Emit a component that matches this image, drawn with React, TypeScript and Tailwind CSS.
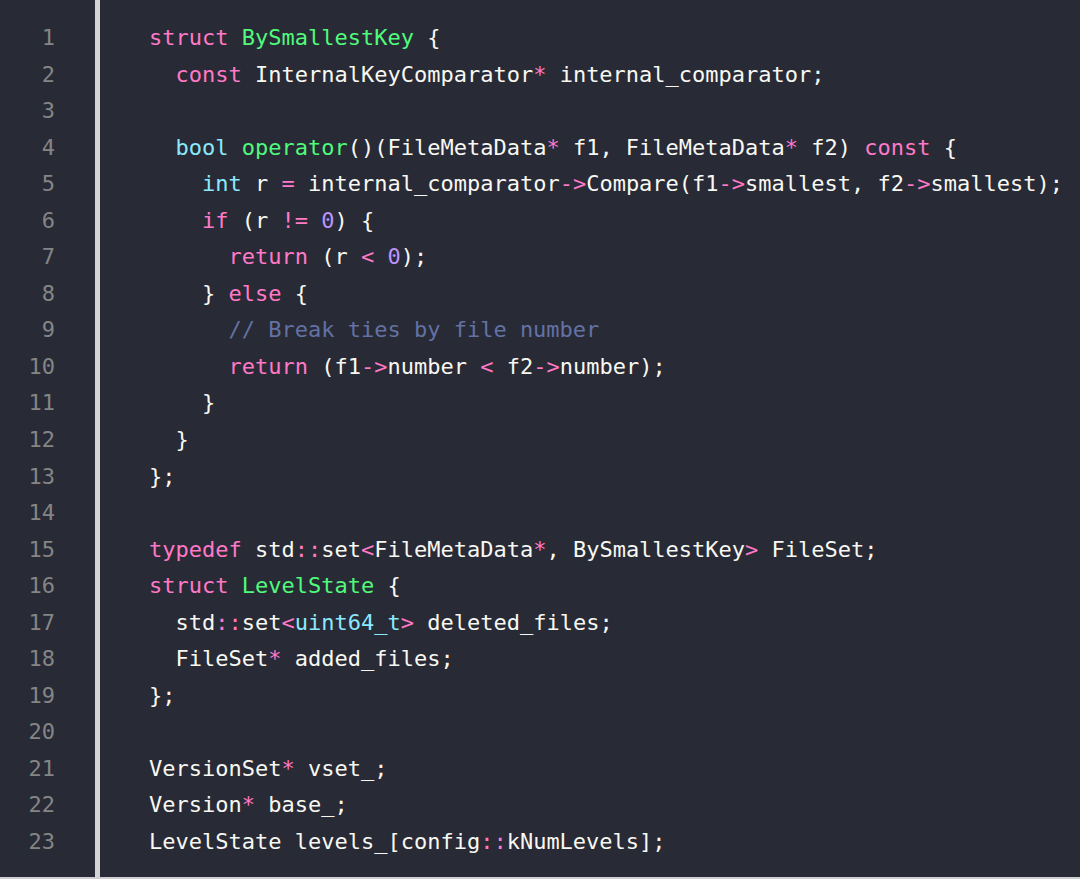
type Tok = [string, string?];

const P = "text-[#ff79c6]";
const G = "text-[#50fa7b]";
const C = "text-[#8be9fd]";
const V = "text-[#bd93f9]";
const M = "text-[#6272a4]";

const lines: Tok[][] = [
  [["struct", P], [" "], ["BySmallestKey", G], [" {"]],
  [["  "], ["const", P], [" InternalKeyComparator"], ["*", P], [" internal_comparator;"]],
  [],
  [["  "], ["bool", C], [" "], ["operator", G], ["()(FileMetaData"], ["*", P], [" f1, FileMetaData"], ["*", P], [" f2) "], ["const", P], [" {"]],
  [["    "], ["int", C], [" r "], ["=", P], [" internal_comparator"], ["->", P], ["Compare(f1"], ["->", P], ["smallest, f2"], ["->", P], ["smallest);"]],
  [["    "], ["if", P], [" (r "], ["!=", P], [" "], ["0", V], [") {"]],
  [["      "], ["return", P], [" (r "], ["<", P], [" "], ["0", V], [");"]],
  [["    } "], ["else", P], [" {"]],
  [["      "], ["// Break ties by file number", M]],
  [["      "], ["return", P], [" (f1"], ["->", P], ["number "], ["<", P], [" f2"], ["->", P], ["number);"]],
  [["    }"]],
  [["  }"]],
  [["};"]],
  [],
  [["typedef", P], [" std"], ["::", P], ["set"], ["<", P], ["FileMetaData"], ["*", P], [", BySmallestKey"], [">", P], [" FileSet;"]],
  [["struct", P], [" "], ["LevelState", G], [" {"]],
  [["  std"], ["::", P], ["set"], ["<", P], ["uint64_t", C], [">", P], [" deleted_files;"]],
  [["  FileSet"], ["*", P], [" added_files;"]],
  [["};"]],
  [],
  [["VersionSet"], ["*", P], [" vset_;"]],
  [["Version"], ["*", P], [" base_;"]],
  [["LevelState levels_[config"], ["::", P], ["kNumLevels];"]],
];

export default function App() {
  return (
    <div className="w-full h-[879px] bg-[#282a36] border-b-2 border-[#cfcfd2] flex font-['DejaVu_Sans_Mono',monospace] text-[22px] leading-[36.55px] overflow-hidden">
      <div className="w-[95px] shrink-0 pt-[20px] pr-[40px] text-right text-[#858585]">
        {lines.map((_, i) => (
          <div key={i}>{i + 1}</div>
        ))}
      </div>
      <div className="w-[5px] shrink-0 bg-[#d4d4d6]" />
      <div className="flex-1 pt-[20px] pl-[49px] text-[#f8f8f2] whitespace-pre">
        {lines.map((toks, i) => (
          <div key={i} className="h-[36.55px]">
            {toks.map(([t, cls], j) => (
              <span key={j} className={cls}>{t}</span>
            ))}
          </div>
        ))}
      </div>
    </div>
  );
}
